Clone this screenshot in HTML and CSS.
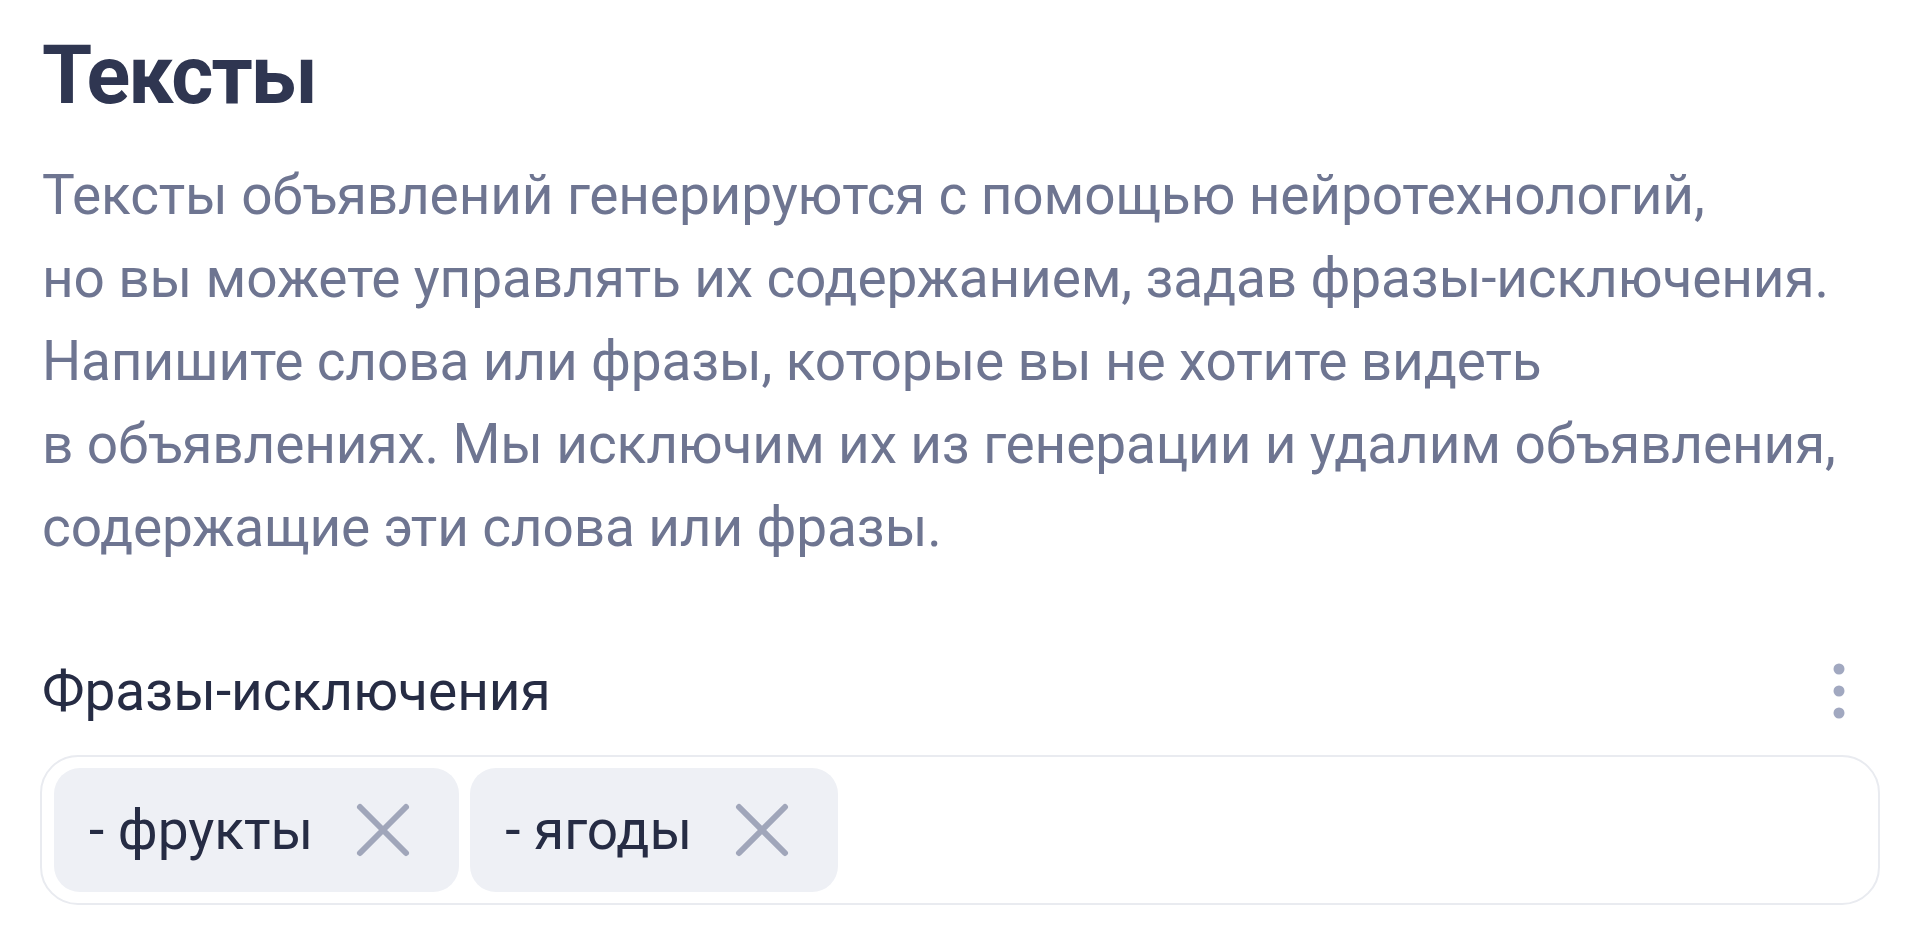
FILE: index.html
```html
<!DOCTYPE html>
<html lang="ru">
<head>
<meta charset="utf-8">
<title>Тексты</title>
<link rel="stylesheet" href="styles.css">
</head>
<body>
<main class="page">
  <h1 class="title">Тексты</h1>
  <p class="desc">Тексты объявлений генерируются с помощью нейротехнологий,<br>но вы можете управлять их содержанием, задав фразы-исключения.<br>Напишите слова или фразы, которые вы не хотите видеть<br>в объявлениях. Мы исключим их из генерации и удалим объявления,<br>содержащие эти слова или фразы.</p>
  <section class="field">
    <div class="field-head">
      <span class="label">Фразы-исключения</span>
      <button class="more" aria-label="Ещё">
        <svg width="14" height="58" viewBox="0 0 14 58"><circle cx="7" cy="7" r="5.5"/><circle cx="7" cy="29" r="5.5"/><circle cx="7" cy="51" r="5.5"/></svg>
      </button>
    </div>
    <div class="tags">
      <span class="chip"><span class="chip-text">- фрукты</span><svg class="x" viewBox="0 0 56 56"><path d="M5 5 L51 51 M51 5 L5 51"/></svg></span>
      <span class="chip"><span class="chip-text">- ягоды</span><svg class="x" viewBox="0 0 56 56"><path d="M5 5 L51 51 M51 5 L5 51"/></svg></span>
    </div>
  </section>
</main>
</body>
</html>
```
FILE: styles.css
```css
html, body {
  margin: 0;
  padding: 0;
  background: #ffffff;
}
body {
  font-family: Roboto, "Noto Sans", sans-serif;
}
.page {
  padding: 26px 40px 0 40px;
}
.title {
  margin: 0;
  font-size: 81px;
  font-weight: 700;
  line-height: 100px;
  letter-spacing: -2px;
  color: #2f3651;
  padding-left: 2px;
}
.desc {
  margin: 28px 0 0 0;
  font-size: 55px;
  line-height: 83px;
  letter-spacing: -0.15px;
  color: #6e7591;
  padding-left: 2px;
}
.field {
  margin-top: 82px;
}
.field-head {
  display: flex;
  align-items: center;
  justify-content: space-between;
  height: 80px;
}
.label {
  font-size: 55px;
  color: #262c44;
  padding-left: 2px;
}
.more {
  border: 0;
  background: none;
  padding: 0;
  margin-right: 34px;
  display: flex;
}
.more svg circle {
  fill: #a1a8c0;
}
.tags {
  margin-top: 24px;
  border: 2px solid #e9ebf0;
  border-radius: 38px;
  padding: 11px 12px;
  display: flex;
  gap: 11px;
}
.chip {
  display: inline-flex;
  align-items: center;
  height: 124px;
  padding: 0 48px 0 35px;
  background: #eef0f5;
  border-radius: 26px;
  gap: 42px;
}
.chip-text {
  font-size: 55px;
  color: #262c44;
}
.x {
  width: 56px;
  height: 56px;
}
.x path {
  stroke: #a0a6ba;
  stroke-width: 6;
  stroke-linecap: round;
  fill: none;
}
```
